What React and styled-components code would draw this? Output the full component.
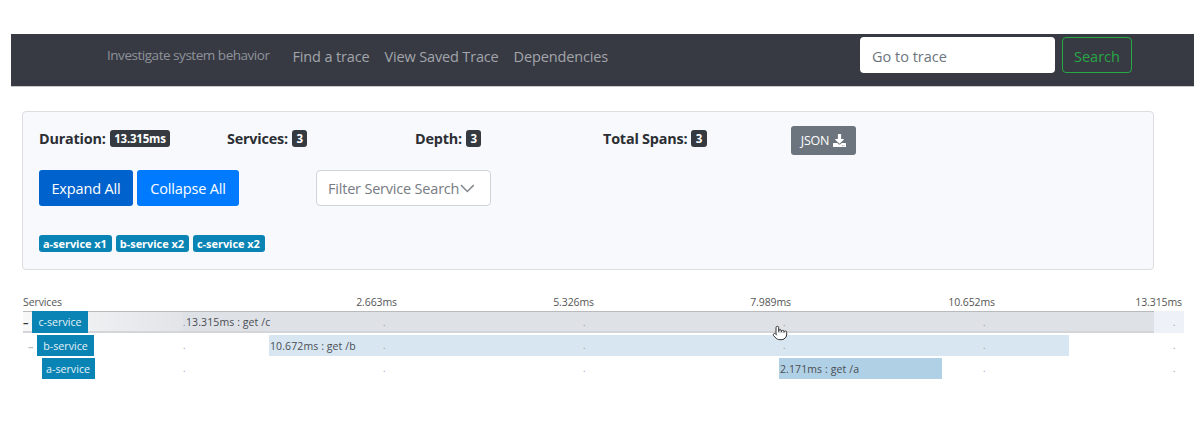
import React from 'react'
import styled, { createGlobalStyle } from 'styled-components'
import { FaDownload } from 'react-icons/fa'
import { Pointer } from 'lucide-react'

const GlobalStyle = createGlobalStyle`
  html, body {
    margin: 0;
    background: #fff;
    font-family: "Open Sans", "Noto Sans", sans-serif;
    color: #212529;
  }
`

const Page = styled.div`
  width: 1194px;
  height: 434px;
  overflow: hidden;
  padding: 34px 0 0 11px;
  box-sizing: border-box;
`

const Navbar = styled.nav`
  height: 53px;
  background: #373a43;
  display: flex;
  align-items: center;
  padding: 0 0 10px 96px;
  border-bottom: 1px solid #c9cacd;
  box-sizing: border-box;
`

const Brand = styled.span`
  font-size: 13.5px;
  color: #8f929a;
  margin: -1px 23px 0 0;
  letter-spacing: -0.47px;
`

const NavLink = styled.a`
  font-size: 14.5px;
  color: #a2a5aa;
  margin: 3px 15px 0 0;
  letter-spacing: -0.15px;
`

const SearchForm = styled.div`
  margin-left: auto;
  margin-right: 62px;
  display: flex;
  gap: 7px;
`

const TraceInput = styled.div`
  width: 195px;
  height: 36px;
  box-sizing: border-box;
  background: #fff;
  border-radius: 4px;
  padding: 3px 12px 0;
  display: flex;
  align-items: center;
  font-size: 14.5px;
  color: #6c757d;
`

const SearchButton = styled.div`
  width: 70px;
  height: 36px;
  box-sizing: border-box;
  border: 1px solid #28a745;
  border-radius: 4px;
  padding-top: 3px;
  display: flex;
  align-items: center;
  justify-content: center;
  font-size: 14.5px;
  color: #28a745;
`

const Panel = styled.section`
  width: 1132px;
  height: 159px;
  box-sizing: border-box;
  margin: 24px 0 0 11px;
  background: #f8f9fc;
  border: 1px solid #dcdde0;
  border-radius: 4px;
  padding: 13px 16px 0;
`

const StatsRow = styled.div`
  display: flex;
  align-items: flex-start;
  height: 45px;
`

const Stat = styled.div`
  width: ${({ $width }) => $width}px;
  height: 26px;
  display: flex;
  align-items: center;
  gap: 4px;
  font-size: 14.4px;
  font-weight: 700;
  letter-spacing: -0.2px;
  color: #2b2e33;
`

const Badge = styled.span`
  background: #343a40;
  color: #fff;
  border-radius: 3px;
  font-size: 11.5px;
  font-weight: 700;
  line-height: 17px;
  height: 17px;
  padding: 0 4.5px;
  letter-spacing: -0.2px;
`

const JsonButton = styled.div`
  width: 65px;
  height: 29px;
  margin-top: 1px;
  background: #6c757d;
  border-radius: 3px;
  color: #fff;
  font-size: 12.5px;
  display: flex;
  align-items: center;
  justify-content: center;
  gap: 4px;
  letter-spacing: -0.2px;
`

const ActionsRow = styled.div`
  display: flex;
  align-items: center;
  gap: 4px;
`

const ActionButton = styled.div`
  height: 36px;
  width: ${({ $width }) => $width}px;
  background: ${({ $active }) => ($active ? '#0062cc' : '#007bff')};
  color: #fff;
  border-radius: 3px;
  font-size: 14.5px;
  display: flex;
  align-items: center;
  justify-content: center;
  letter-spacing: -0.15px;
`

const FilterSelect = styled.div`
  width: 175px;
  height: 36px;
  box-sizing: border-box;
  margin-left: 73px;
  background: #fff;
  border: 1px solid #ced4da;
  border-radius: 4px;
  padding: 0 15px 0 11px;
  display: flex;
  align-items: center;
  gap: 1px;
  font-size: 14.5px;
  color: #777b82;
  letter-spacing: -0.2px;
  white-space: nowrap;
`

const Chips = styled.div`
  display: flex;
  gap: 4px;
  margin-top: 29px;
`

const Chip = styled.span`
  background: #0a84b4;
  color: #fff;
  border-radius: 3px;
  font-size: 11px;
  font-weight: 700;
  line-height: 17px;
  height: 17px;
  padding: 0 5px 0 4px;
  letter-spacing: -0.05px;
`

const Timeline = styled.div`
  position: relative;
  margin: 23px 0 0 12px;
  width: 1161px;
  font-size: 10.5px;
  color: #555;
`

const TickHeader = styled.div`
  display: grid;
  grid-template-columns: 60px 314px 197px 197px 204px 187px;
  height: 18px;
  align-items: center;
  letter-spacing: -0.1px;
`

const TickLabel = styled.span`
  text-align: ${({ $left }) => ($left ? 'left' : 'right')};
`

const Row = styled.div`
  display: grid;
  grid-template-columns: 160px 1fr;
  box-sizing: border-box;
  height: ${({ $height }) => $height}px;
  padding-top: ${({ $top }) => $top}px;
  background: ${({ $root }) => ($root ? '#eef1f8' : 'transparent')};
`

const rootEdges = 'inset 0 1px 0 #b9babd, inset 0 -2px 0 #d4d5d9'

const ServiceCell = styled.div`
  display: flex;
  align-items: stretch;
  padding-left: ${({ $indent }) => $indent}px;
  background: ${({ $root }) => ($root ? 'linear-gradient(90deg, #f8f8f8, #e2e4e8)' : 'transparent')};
  box-shadow: ${({ $root }) => ($root ? rootEdges : 'none')};
`

const Toggle = styled.span`
  width: 9px;
  line-height: 21px;
  font-size: 11px;
  font-weight: 700;
  color: ${({ $root }) => ($root ? '#333' : '#bbb')};
`

const ServiceName = styled.span`
  background: #0a84b4;
  color: #e4f1f7;
  display: flex;
  align-items: center;
  justify-content: center;
  width: ${({ $width }) => $width}px;
  font-size: 10.7px;
`

const Track = styled.div`
  position: relative;
`

const Bar = styled.div`
  box-sizing: border-box;
  height: 100%;
  background: ${({ $color }) => $color};
  padding-left: ${({ $pad }) => $pad}px;
  display: flex;
  align-items: center;
  font-size: 10.5px;
  color: #4a4d52;
  white-space: nowrap;
  letter-spacing: 0.1px;
  box-shadow: ${({ $root }) => ($root ? rootEdges : 'none')};
`

const Dots = styled.div`
  position: absolute;
  inset: 0;
  display: grid;
  grid-template-columns: 200px 200px 200px 200px 190px 10px;
  align-items: center;
  color: #8a8c90;
  font-size: 9px;
  pointer-events: none;
`

const Cursor = styled.div`
  position: absolute;
  left: 749px;
  top: 32px;
  line-height: 0;
  color: #333;
`

const spans = [
  { name: 'c-service', nameW: 56, indent: 0, toggle: true, root: true, h: 22, top: 0, left: 0, width: 971, color: '#dee1e6', label: '13.315ms : get /c', pad: 3 },
  { name: 'b-service', nameW: 57, indent: 5, toggle: true, h: 23, top: 2, left: 86, width: 800, color: '#d8e6f2', label: '10.672ms : get /b', pad: 1 },
  { name: 'a-service', nameW: 53, indent: 18.5, h: 23, top: 2, left: 596, width: 163, color: '#b0d0e6', label: '2.171ms : get /a', pad: 1, hideDot: 3 },
]

const ticks = ['2.663ms', '5.326ms', '7.989ms', '10.652ms', '13.315ms']

export default function App() {
  return (
    <Page>
      <GlobalStyle />
      <Navbar>
        <Brand>Investigate system behavior</Brand>
        <NavLink>Find a trace</NavLink>
        <NavLink>View Saved Trace</NavLink>
        <NavLink>Dependencies</NavLink>
        <SearchForm>
          <TraceInput>Go to trace</TraceInput>
          <SearchButton>Search</SearchButton>
        </SearchForm>
      </Navbar>

      <Panel>
        <StatsRow>
          <Stat $width={188}>Duration: <Badge>13.315ms</Badge></Stat>
          <Stat $width={188}>Services: <Badge>3</Badge></Stat>
          <Stat $width={188}>Depth: <Badge>3</Badge></Stat>
          <Stat $width={188}>Total Spans: <Badge>3</Badge></Stat>
          <JsonButton>JSON <FaDownload size={13} /></JsonButton>
        </StatsRow>
        <ActionsRow>
          <ActionButton $width={94} $active>Expand All</ActionButton>
          <ActionButton $width={102}>Collapse All</ActionButton>
          <FilterSelect>
            Filter Service Search
            <svg width="15" height="9" viewBox="0 0 15 9" fill="none" stroke="#868a90" strokeWidth="1.6">
              <path d="M1 1l6.5 6.5L14 1" />
            </svg>
          </FilterSelect>
        </ActionsRow>
        <Chips>
          <Chip>a-service x1</Chip>
          <Chip>b-service x2</Chip>
          <Chip>c-service x2</Chip>
        </Chips>
      </Panel>

      <Timeline>
        <TickHeader>
          <TickLabel $left>Services</TickLabel>
          {ticks.map((t) => <TickLabel key={t}>{t}</TickLabel>)}
        </TickHeader>
        {spans.map((s) => (
          <Row key={s.name} $root={s.root} $height={s.h} $top={s.top}>
            <ServiceCell $indent={s.indent} $root={s.root}>
              {s.toggle && <Toggle $root={s.root}>–</Toggle>}
              <ServiceName $width={s.nameW}>{s.name}</ServiceName>
            </ServiceCell>
            <Track>
              <Bar
                $color={s.color}
                $pad={s.pad}
                $root={s.root}
                style={{ width: s.width, marginLeft: s.left }}
              >
                {s.label}
              </Bar>
              <Dots>
                {[0, 1, 2, 3, 4, 5].map((i) => <span key={i}>{i === s.hideDot ? '' : '.'}</span>)}
              </Dots>
            </Track>
          </Row>
        ))}
        <Cursor><Pointer size={16} strokeWidth={1.5} fill="#fff" /></Cursor>
      </Timeline>
    </Page>
  )
}
